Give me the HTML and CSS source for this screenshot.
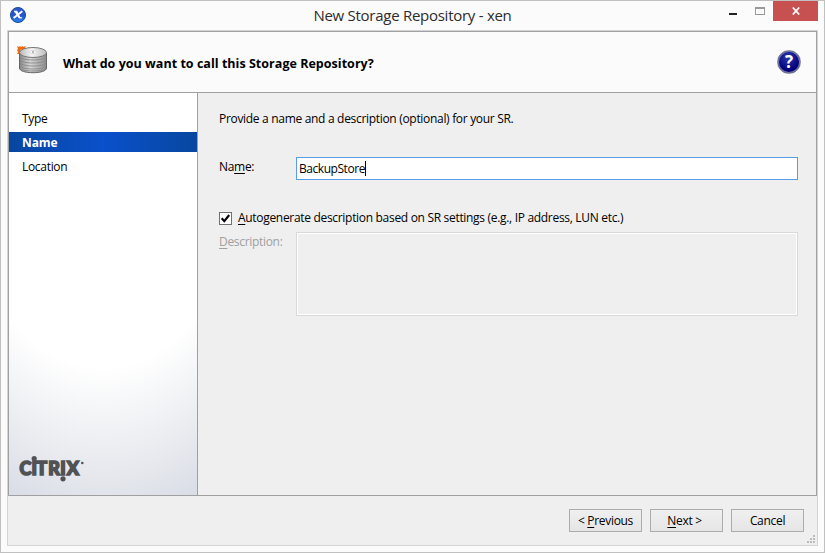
FILE: index.html
```html
<!DOCTYPE html>
<html lang="en">
<head>
<meta charset="utf-8">
<title>New Storage Repository - xen</title>
<link rel="stylesheet" href="styles.css">
</head>
<body>
<div class="window">
  <header class="titlebar">
    <svg class="app-icon" width="18" height="18" viewBox="0 0 18 18">
      <defs>
        <linearGradient id="app" x1="0" y1="0" x2="0" y2="1"><stop offset="0" stop-color="#315bd0"/><stop offset=".5" stop-color="#2454c8"/><stop offset="1" stop-color="#2b86e8"/></linearGradient>
      </defs>
      <circle cx="9" cy="9" r="7.500" fill="url(#app)" stroke="#1e479c"/>
      <path d="M5 5.500h2.700l3.100 6.300h1.900" fill="none" stroke="#fff" stroke-width="1.500"/>
      <path d="M6.600 5.800l3.600 5.600" stroke="#fff" stroke-width="1.800"/>
      <path d="M13.300 5.300L4.600 12" stroke="#fff" stroke-width="1.900"/>
    </svg>
    <h1 class="title">New Storage Repository - xen</h1>
    <div class="controls">
      <span class="minimize"></span>
      <span class="maximize"></span>
      <span class="close"><svg width="8" height="8" viewBox="0 0 8 8"><path d="M.8.5l6.400 7M7.200.5l-6.400 7" stroke="#fff" stroke-width="1.700"/></svg></span>
    </div>
  </header>
  <div class="client">
    <div class="wizard">
      <div class="banner">
        <svg class="disk" width="32" height="32" viewBox="0 0 32 32">
          <defs>
            <linearGradient id="side"><stop offset="0" stop-color="#858585"/><stop offset=".4" stop-color="#d8d8d8"/><stop offset="1" stop-color="#8b8b8b"/></linearGradient>
            <linearGradient id="top"><stop offset="0" stop-color="#b9b9b9"/><stop offset=".45" stop-color="#f4f4f4"/><stop offset="1" stop-color="#bdbdbd"/></linearGradient>
          </defs>
          <path d="M0 0l2 1 1-1 1 1 2-1v1l3-1-1 2 1 1v5H3L0 8l1-2-1-2 1-1z" fill="#f26a0c"/>
          <path d="M4 3l3 0-2 3-2-1z" fill="#ffc23a"/>
          <path d="M2.500 7v15c0 3 6 4.700 13.500 4.700S29.500 25 29.500 22V7z" fill="url(#side)" stroke="#646464"/>
          <path d="M3 10c1 3 6 4 13 4s12-1 13-4M3 13c1 3 6 4 13 4s12-1 13-4M3 16c1 3 6 4 13 4s12-1 13-4M3 19c1 3 6 4 13 4s12-1 13-4M3 22c1 2 6 3 13 3s12-1 13-3" fill="none" stroke="#888" stroke-width=".9"/>
          <ellipse cx="16" cy="6.500" rx="13.500" ry="5" fill="url(#top)" stroke="#777"/>
          <ellipse cx="16" cy="6" rx="3.500" ry="1.500" fill="#fff" stroke="#ccc" stroke-width=".7"/>
          <path d="M15 6h2" stroke="#777"/>
        </svg>
        <h2 class="question">What do you want to call this Storage Repository?</h2>
        <div class="help">?</div>
      </div>
      <div class="body">
        <nav class="steps">
          <div class="step">Type</div>
          <div class="step current">Name</div>
          <div class="step">Location</div>
          <svg class="brand" width="68" height="28" viewBox="0 0 68 28">
            <g fill="#505256">
              <text class="wordmark" y="20" x=".4 12.500 17.300 29.200 41.300 47.800">CITRIX</text>
              <circle cx="15.200" cy="3.500" r="2.600"/>
              <circle cx="44" cy="23.800" r="2.600"/>
              <circle cx="63.300" cy="8" r="1.300"/>
            </g>
          </svg>
        </nav>
        <main class="page">
          <p class="intro">Provide a name and a description (optional) for your SR.</p>
          <div class="row name-row">
            <label class="label name-label">Na<u>m</u>e:</label>
            <div class="input"><span class="value">BackupStore</span><span class="caret"></span></div>
          </div>
          <div class="check-row">
            <span class="checkbox"><svg width="11" height="11" viewBox="0 0 11 11"><path d="M1.700 5.200l2.600 3L9.200 2" fill="none" stroke="#000" stroke-width="2.100"/></svg></span>
            <label class="check-label"><u>A</u>utogenerate description based on SR settings (e.g., IP address, LUN etc.)</label>
          </div>
          <div class="row">
            <label class="label desc-label"><u>D</u>escription:</label>
            <div class="textarea"></div>
          </div>
        </main>
      </div>
    </div>
    <footer class="actions">
      <div class="button">&lt;&nbsp;<u>P</u>revious</div>
      <div class="button"><span class="next"><u>N</u>ext &gt;</span></div>
      <div class="button">Cancel</div>
      <svg class="grip" width="8" height="8" viewBox="0 0 8 8" fill="#bbb"><path d="M6 0h2v2H6zM3 3h2v2H3zM6 3h2v2H6zM0 6h2v2H0zM3 6h2v2H3zM6 6h2v2H6z"/></svg>
    </footer>
  </div>
</div>
</body>
</html>
```

FILE: styles.css
```css
* { box-sizing: border-box; }
body {
  margin: 0;
  font: 12px/16px "Open Sans", "Noto Sans", sans-serif;
  letter-spacing: -0.31px;
  color: #000;
}
h1, h2, p { margin: 0; }
u { text-underline-offset: 2px; text-decoration-thickness: 1px; text-decoration-skip-ink: none; }
.window {
  width: 825px;
  height: 553px;
  border: 1px solid #c0c0c0;
  background: #fbfbfb;
  padding: 0 6px;
}
.titlebar { display: flex; height: 29px; }
.app-icon { margin: 5px 0 0 2px; }
.title {
  flex: 1;
  margin-left: 121px;
  text-align: center;
  font-size: 15px;
  font-weight: 400;
  line-height: 29px;
  letter-spacing: -0.27px;
  color: #2b2b2b;
}
.controls { display: flex; width: 141px; }
.minimize { width: 8px; height: 2px; background: #222; margin: 12px 0 0 52px; }
.maximize { width: 10px; height: 8px; border: 1px solid #999; border-top-width: 2px; margin: 6px 8px 0 18px; }
.close { width: 45px; height: 20px; background: #c75050; display: flex; align-items: center; justify-content: center; }
.client { width: 811px; height: 516px; border: 1px solid #d4d4d4; background: #efefef; }
.wizard { height: 465px; border: 1px solid #a0a0a0; }
.banner {
  height: 61px;
  background: #fbfbfb;
  border-bottom: 1px solid #a0a0a0;
  display: flex;
  align-items: center;
  padding: 0 15px 0 8px;
}
.question { flex: 1; margin: 3px 0 0 14px; font-size: 12.500px; font-weight: 700; letter-spacing: 0.03px; }
.help {
  width: 24px;
  height: 24px;
  border-radius: 50%;
  border: 1px solid #8d8d9a;
  box-shadow: inset 0 0 0 1px #6f75a8;
  background: radial-gradient(circle at 45% 30%, #2b38ae, #03037c 60%, #00005e);
  color: #fff;
  font: 700 17px/22px "Open Sans", sans-serif;
  text-align: center;
}
.body { display: flex; height: 402px; }
.steps {
  width: 189px;
  border-right: 1px solid #a0a0a0;
  padding-top: 15px;
  background: radial-gradient(ellipse 240px 410px at 50% 0, #fff 67%, #e6e8ed 93%, #d8dce6 106%);
  display: flex;
  flex-direction: column;
}
.step { height: 20px; line-height: 22px; padding-left: 13px; margin-bottom: 4px; }
.step.current {
  color: #fff;
  font-weight: 700;
  letter-spacing: -0.1px;
  background: linear-gradient(90deg, #07479f, #0a50cb 50%, #07479f);
}
.brand { margin: auto 0 12px 10px; }
.wordmark { font: 900 18px Lato, sans-serif; letter-spacing: 0; stroke: #505256; stroke-width: 1.600px; }
.page { flex: 1; padding: 18px 18px 0 21px; }
.row { display: flex; align-items: flex-start; }
.label { width: 77px; }
.name-row { margin-top: 30px; }
.name-label { padding-top: 2px; }
.input {
  flex: 1;
  height: 23px;
  background: #fff;
  border: 1px solid #569de5;
  display: flex;
  align-items: center;
  padding-left: 2px;
}
.value { letter-spacing: -0.45px; }
.caret { width: 1px; height: 15px; background: #000; }
.check-row { display: flex; align-items: center; margin: 30px 0 6px; height: 16px; }
.checkbox { width: 13px; height: 13px; border: 1px solid #707070; background: #fff; margin-right: 6px; }
.checkbox svg { display: block; }
.desc-label { color: #a0a0a0; padding-top: 2px; }
.textarea { flex: 1; height: 84px; border: 1px solid #d9d9d9; box-shadow: inset 0 0 0 1px #fff; }
.actions { position: relative; display: flex; justify-content: flex-end; gap: 8px; padding: 13px 13px 0 0; }
.button {
  width: 73px;
  height: 23px;
  border: 1px solid #acacac;
  background: linear-gradient(#f0f0f0, #e5e5e5);
  line-height: 22px;
  text-align: center;
}
.next { margin-right: 4px; }
.grip { position: absolute; right: 2px; top: 39px; }
```
